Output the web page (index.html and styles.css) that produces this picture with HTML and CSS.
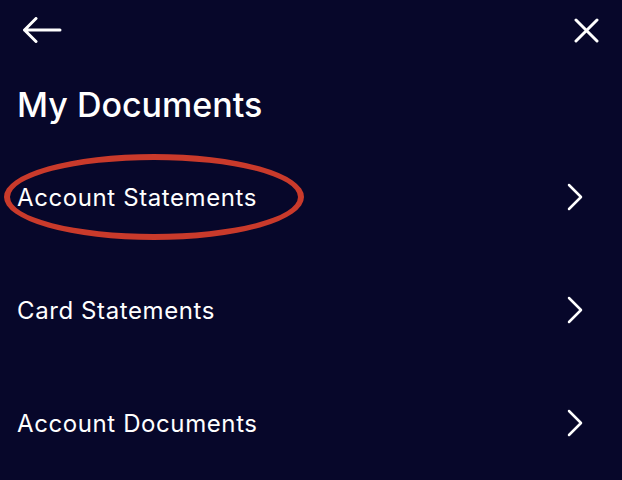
FILE: index.html
```html
<!DOCTYPE html>
<html lang="en">
<head>
  <meta charset="UTF-8">
  <meta name="viewport" content="width=device-width, initial-scale=1">
  <title>My Documents</title>
  <link rel="stylesheet" href="styles.css">
</head>
<body>
  <div class="top-bar">
    <button class="icon-btn" aria-label="Back">
      <svg width="40" height="26" viewBox="0 0 40 26">
        <path d="M14 1.5 L2.5 13 L14 24.5 M2.5 13 H38" fill="none" stroke="#fff" stroke-width="3" stroke-linecap="round" stroke-linejoin="round"/>
      </svg>
    </button>
    <button class="icon-btn" aria-label="Close">
      <svg width="25" height="25" viewBox="0 0 25 25">
        <path d="M2 2 L23 23 M23 2 L2 23" fill="none" stroke="#fff" stroke-width="3" stroke-linecap="round"/>
      </svg>
    </button>
  </div>

  <h1 class="title">My Documents</h1>

  <!-- document list -->
  <div class="doc-list">
    <a class="doc-row" href="#">
      <span class="doc-name">Account Statements</span>
      <svg class="chevron" width="16" height="28" viewBox="0 0 16 28">
        <path d="M2 2 L14 14 L2 26" fill="none" stroke="#fff" stroke-width="2.5" stroke-linecap="round" stroke-linejoin="round"/>
      </svg>
      <span class="highlight"></span>
    </a>
    <a class="doc-row" href="#">
      <span class="doc-name">Card Statements</span>
      <svg class="chevron" width="16" height="28" viewBox="0 0 16 28">
        <path d="M2 2 L14 14 L2 26" fill="none" stroke="#fff" stroke-width="2.5" stroke-linecap="round" stroke-linejoin="round"/>
      </svg>
    </a>
    <a class="doc-row" href="#">
      <span class="doc-name">Account Documents</span>
      <svg class="chevron" width="16" height="28" viewBox="0 0 16 28">
        <path d="M2 2 L14 14 L2 26" fill="none" stroke="#fff" stroke-width="2.5" stroke-linecap="round" stroke-linejoin="round"/>
      </svg>
    </a>
  </div>
</body>
</html>
```

FILE: styles.css
```css
body {
  font-family: Inter, 'Noto Sans', sans-serif;
  margin: 0;
  padding: 0;
  background: #07072a;
  color: #fff;
  overflow: hidden;
}

.top-bar {
  display: flex;
  justify-content: space-between;
  align-items: center;
  height: 60px;
  padding: 0 23px 0 22px;
}

.icon-btn {
  background: none;
  border: none;
  padding: 0;
  display: flex;
  cursor: pointer;
}

.title {
  font-size: 34px;
  font-weight: 500;
  line-height: 44px;
  margin: 23px 0 0;
  padding-left: 17px;
}

.doc-list {
  margin-top: 13px;
}

.doc-row {
  position: relative;
  display: flex;
  justify-content: space-between;
  align-items: center;
  height: 113px;
  padding: 0 39px 0 17px;
  color: #fff;
  text-decoration: none;
}

.doc-name {
  font-size: 24px;
  font-weight: 400;
  letter-spacing: 0.6px;
  margin-top: 2px;
}

/* red annotation ring around the first item */
.highlight {
  position: absolute;
  left: 4px;
  top: 14px;
  width: 300px;
  height: 86px;
  box-sizing: border-box;
  border: 6px solid #c93a2b;
  border-radius: 50%;
}
```
